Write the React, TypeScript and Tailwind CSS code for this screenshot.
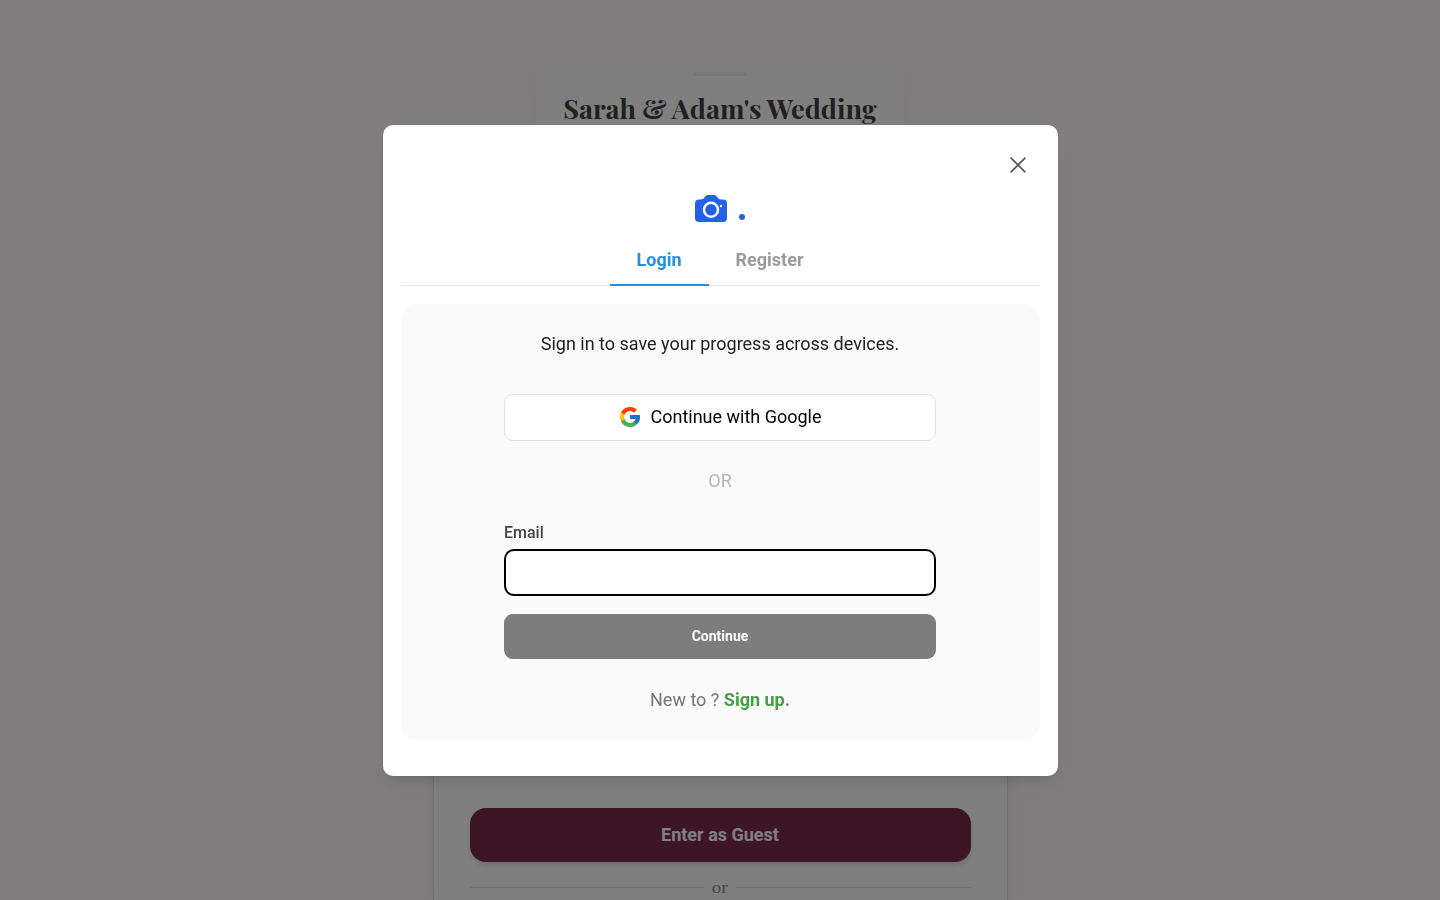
import { useState } from 'react';

const tabs = ['Login', 'Register'];

function CameraIcon() {
  return (
    <svg viewBox="0 0 32 27" className="mt-px h-[27px] w-8" aria-hidden="true">
      <path
        d="M4 4.4h2.2c1.2 0 1.9-.4 2.6-1.2l1-1.3C10.8.6 11.9 0 13.4 0h5.2c1.5 0 2.6.6 3.6 1.900l1 1.300c.7.8 1.4 1.2 2.6 1.2H28a4 4 0 0 1 4 4V23a4 4 0 0 1-4 4H4a4 4 0 0 1-4-4V8.400a4 4 0 0 1 4-4z"
        fill="#2361ea"
      />
      <circle cx="16" cy="14.8" r="7" fill="none" stroke="#fff" strokeWidth="2.4" />
      <circle cx="26" cy="11" r="1.2" fill="#fff" />
    </svg>
  );
}

function GoogleIcon() {
  return (
    <svg viewBox="0 0 48 48" className="size-6" aria-hidden="true">
      <path fill="#FFC107" d="M43.611 20.083H42V20H24v8h11.303c-1.649 4.657-6.080 8-11.303 8-6.627 0-12-5.373-12-12s5.373-12 12-12c3.059 0 5.842 1.154 7.961 3.039l5.657-5.657C34.046 6.053 29.268 4 24 4 12.955 4 4 12.955 4 24s8.955 20 20 20 20-8.955 20-20c0-1.341-.138-2.650-.389-3.917z" />
      <path fill="#FF3D00" d="M6.306 14.691l6.571 4.819C14.655 15.108 18.961 12 24 12c3.059 0 5.842 1.154 7.961 3.039l5.657-5.657C34.046 6.053 29.268 4 24 4 16.318 4 9.656 8.337 6.306 14.691z" />
      <path fill="#4CAF50" d="M24 44c5.166 0 9.860-1.977 13.409-5.192l-6.190-5.238C29.211 35.091 26.715 36 24 36c-5.202 0-9.619-3.317-11.283-7.946l-6.522 5.025C9.505 39.556 16.227 44 24 44z" />
      <path fill="#1976D2" d="M43.611 20.083H42V20H24v8h11.303c-.792 2.237-2.231 4.166-4.087 5.571l6.193 5.238C36.971 39.205 44 34 44 24c0-1.341-.138-2.650-.389-3.917z" />
    </svg>
  );
}

function EventPage() {
  return (
    <main className="flex h-screen flex-col items-center overflow-hidden bg-[#fffafb] pt-[63px]">
      <header className="flex h-24 flex-col items-center rounded-lg bg-white px-[27px] pt-[9px] shadow-lg shadow-black/5">
        <div className="h-1 w-[54px] rounded-full bg-[#efefef]" />
        <h1 className="mt-3 font-['Playfair_Display','Liberation_Serif',serif] text-[27px] leading-10 font-bold whitespace-nowrap text-[#404040]">
          Sarah &amp; Adam&apos;s Wedding
        </h1>
      </header>

      {/* Guest access card */}
      <section className="mt-9 flex w-full max-w-[575px] grow flex-col justify-end rounded-t-2xl border-x border-[#e6e3e3] bg-white px-9 shadow-lg shadow-black/10">
        <button className="h-[54px] shrink-0 rounded-2xl bg-[#7b2a4d] text-lg font-bold text-white shadow-md">
          Enter as Guest
        </button>
        <div className="flex h-[38px] shrink-0 items-center gap-2 pt-3 font-[Lora,'Liberation_Serif',serif] text-base text-[#888]">
          <span className="h-px grow bg-[#e3e3e3]" />
          or
          <span className="h-px grow bg-[#e3e3e3]" />
        </div>
      </section>
    </main>
  );
}

export default function App() {
  const [tab, setTab] = useState('Login');
  const [email, setEmail] = useState('');

  return (
    <div className="font-[Roboto,sans-serif]">
      <EventPage />

      <div className="fixed inset-0 flex items-center justify-center bg-black/50">
        <div
          role="dialog"
          aria-modal="true"
          aria-label={tab}
          className="relative w-full max-w-[675px] rounded-[10px] bg-white px-[18px] pt-[67px] pb-9 shadow-lg"
        >
          <button aria-label="Close" className="absolute top-7 right-7 flex size-6 items-center justify-center">
            <svg viewBox="0 0 16 16" className="size-4" fill="none" stroke="#555" strokeWidth="1.6" aria-hidden="true">
              <path d="M.6.6l14.8 14.8M15.4.6L.6 15.4" />
            </svg>
          </button>

          {/* Logo */}
          <div className="flex h-8 items-center justify-center gap-3">
            <CameraIcon />
            <span className="mt-[18px] size-[6px] rounded-full bg-[#2361ea]" />
          </div>

          <div role="tablist" className="mt-3 flex justify-center border-b border-[#e3e5e6]">
            {tabs.map((name) => (
              <button
                key={name}
                role="tab"
                aria-selected={tab === name}
                onClick={() => setTab(name)}
                className={`-mb-px h-[50px] border-b-2 px-[27px] text-lg font-bold ${
                  tab === name ? 'border-[#2490e3] text-[#2490e3]' : 'border-transparent text-[#9b9b9b]'
                }`}
              >
                {name}
              </button>
            ))}
          </div>

          <div className="mt-[18px] flex flex-col items-center rounded-2xl bg-[#fafafa] px-4 py-[26px] text-lg">
            <p className="text-[#212121]">Sign in to save your progress across devices.</p>

            <form className="mt-9 flex w-full max-w-[432px] flex-col" onSubmit={(e) => e.preventDefault()}>
              <button
                type="button"
                className="flex h-[47px] items-center justify-center gap-2 rounded-[9px] border border-[#dfe1e3] bg-white text-black"
              >
                <GoogleIcon />
                Continue with Google
              </button>
              <span className="mt-[26px] text-center text-[#b5b5b5]">OR</span>
              <label htmlFor="email" className="mt-[26px] text-base font-medium text-[#444]">
                Email
              </label>
              <input
                id="email"
                type="email"
                value={email}
                onChange={(e) => setEmail(e.target.value)}
                className="mt-1 h-[47px] rounded-[10px] border-2 border-black bg-white px-4 outline-none"
              />
              <button className="mt-[18px] h-[45px] rounded-[9px] bg-[#7d7d7d] text-sm font-bold text-white">
                Continue
              </button>
            </form>

            <p className="mt-[27px] text-[#757575]">
              New to ?{' '}
              <a href="#signup" className="font-bold text-[#43a047]">
                Sign up.
              </a>
            </p>
          </div>
        </div>
      </div>
    </div>
  );
}
